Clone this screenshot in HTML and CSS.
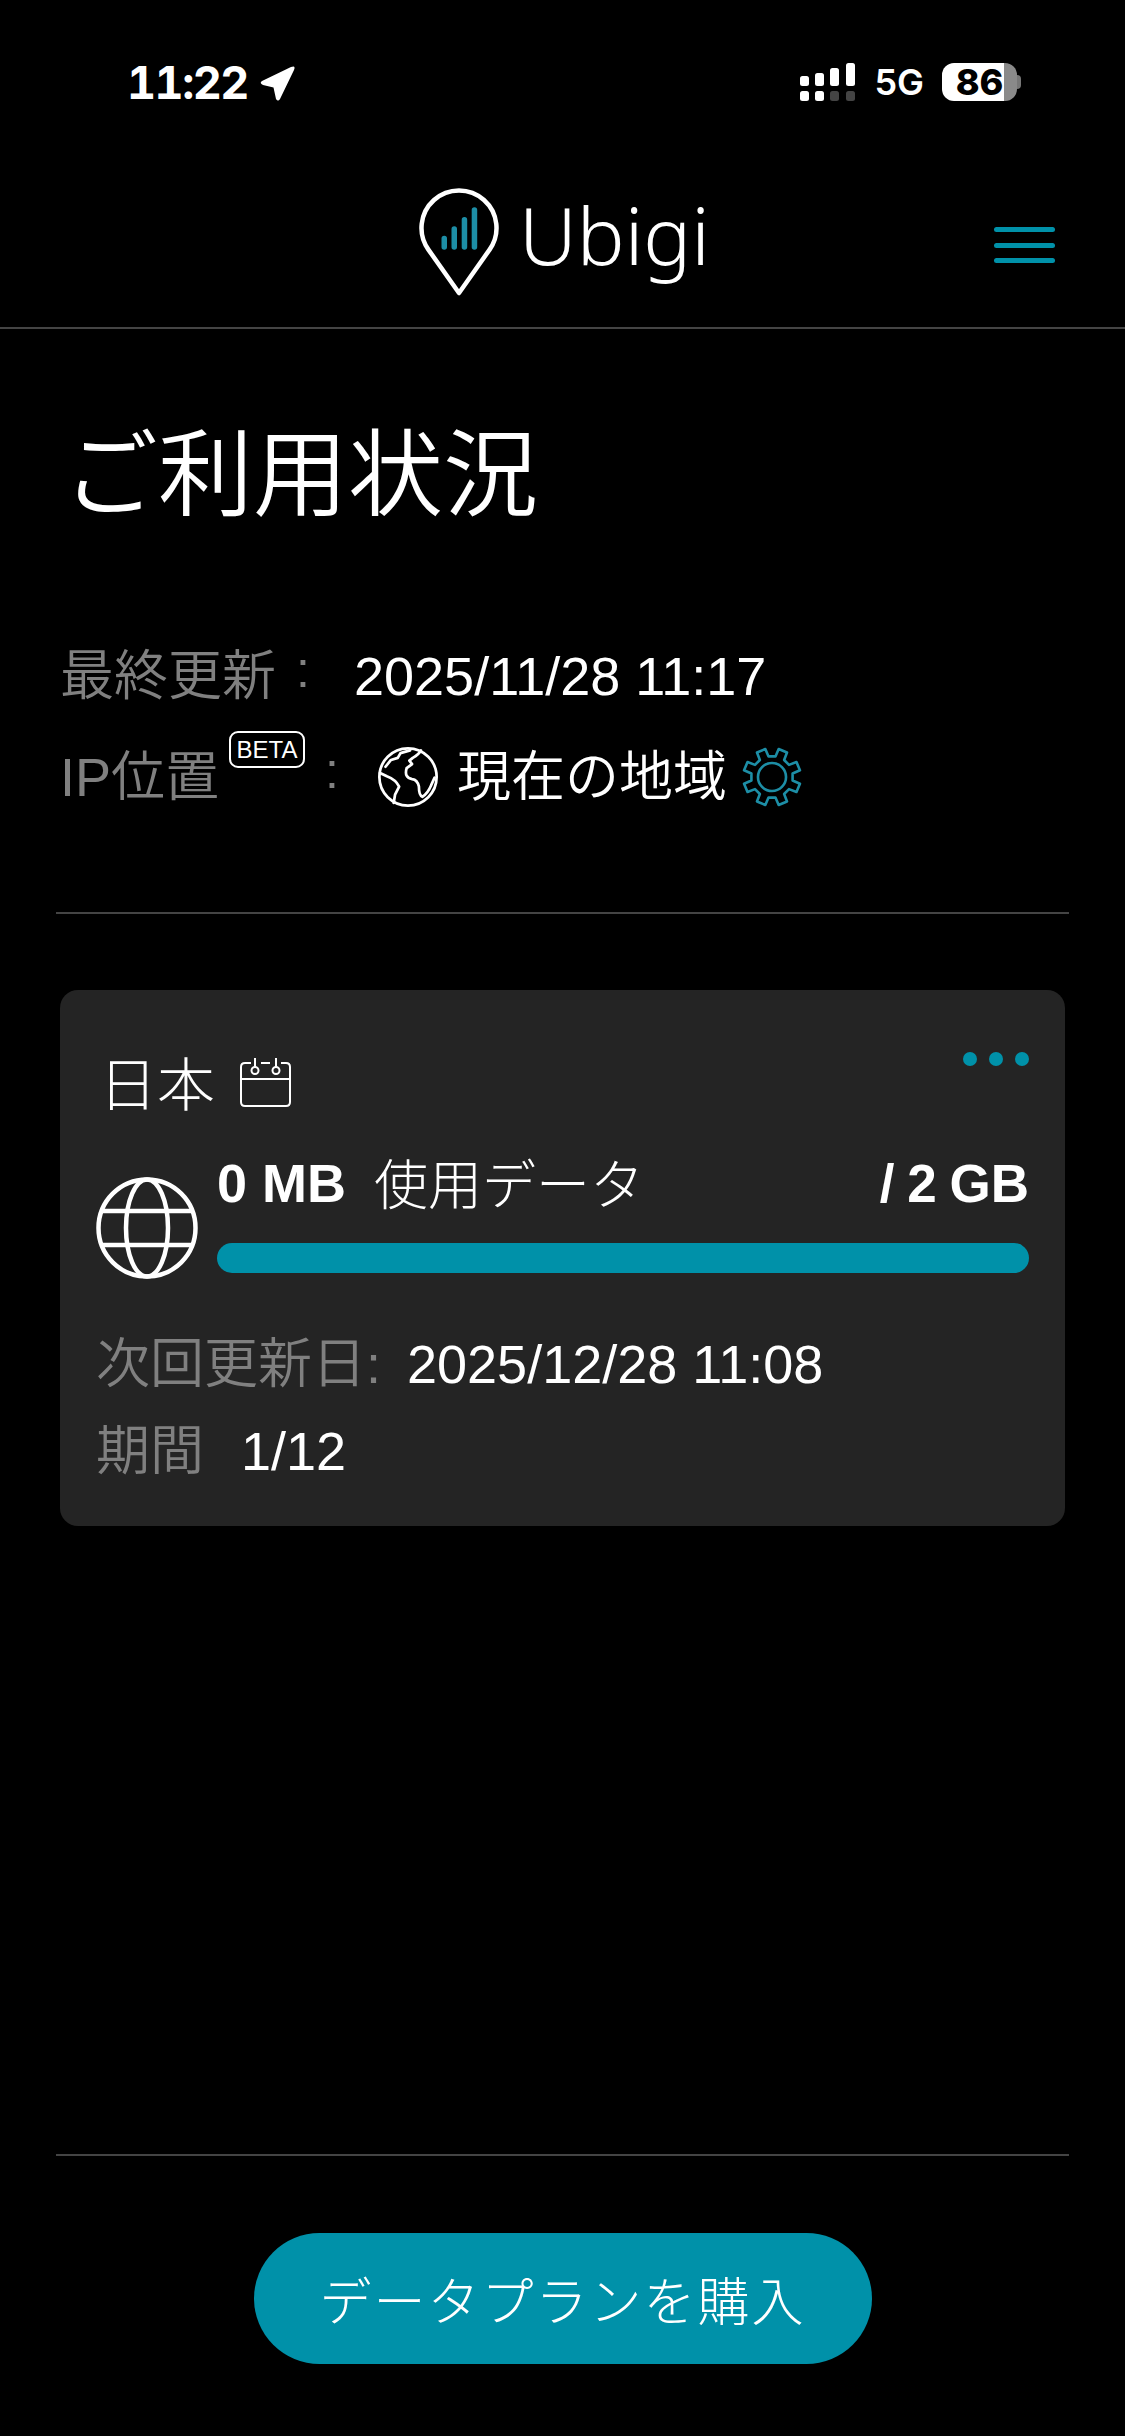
FILE: index.html
```html
<!DOCTYPE html>
<html lang="ja">
<head>
<meta charset="UTF-8" />
<title>ご利用状況</title>
<link rel="stylesheet" href="styles.css">
</head>
<body>
<div class="page">

  <div class="status-bar">
    <div class="status-left">
      <span class="time">11:22</span>
      <svg class="loc-arrow" viewBox="0 0 38 38"><path d="M3 17 L32 3 Q37 1 35 6 L21 35 Q19 38 17 35 L14.500 23.500 L4 21 Q0 19 3 17 Z" fill="#fff"/></svg>
    </div>
    <div class="status-right">
      <svg class="signal" viewBox="0 0 56 38">
        <rect x="0" y="13" width="9" height="10" rx="2.500" fill="#fff"/>
        <rect x="15" y="10" width="9" height="13" rx="2.500" fill="#fff"/>
        <rect x="30" y="5" width="9" height="18" rx="2.500" fill="#fff"/>
        <rect x="46" y="0" width="9" height="23" rx="2.500" fill="#fff"/>
        <rect x="0" y="28" width="9" height="10" rx="2.500" fill="#fff"/>
        <rect x="15" y="28" width="9" height="10" rx="2.500" fill="#fff"/>
        <rect x="30" y="28" width="9" height="10" rx="2.500" fill="#444"/>
        <rect x="46" y="28" width="9" height="10" rx="2.500" fill="#444"/>
      </svg>
      <span class="net">5G</span>
      <div class="battery">
        <div class="battery-body"><span class="battery-level">86</span></div>
        <div class="battery-cap"></div>
      </div>
    </div>
  </div>

  <div class="app-header">
    <div class="logo">
      <svg class="logo-pin" viewBox="0 0 82 110">
        <path d="M41 106 L10.400 62.600 A37.500 37.500 0 1 1 71.600 62.600 Z" fill="none" stroke="#fff" stroke-width="4.500" stroke-linejoin="round"/>
        <g fill="#1d8ea6">
          <rect x="23.500" y="48.700" width="5.500" height="14" rx="2.700"/>
          <rect x="33.500" y="39.300" width="5.500" height="23.400" rx="2.700"/>
          <rect x="43.700" y="30" width="5.500" height="32.700" rx="2.700"/>
          <rect x="53.700" y="20.300" width="5.500" height="42.400" rx="2.700"/>
        </g>
      </svg>
      <span class="logo-text">Ubigi</span>
    </div>
    <div class="menu-btn"><span></span><span></span><span></span></div>
  </div>

  <h1 class="page-title">ご利用状況</h1>

  <div class="info">
    <div class="info-row">
      <span class="info-label label-updated">最終更新</span>
      <span class="info-colon">:</span>
      <span class="info-value value-updated">2025/11/28 11:17</span>
    </div>
    <div class="info-row">
      <span class="info-label label-ip">IP位置<span class="beta">BETA</span></span>
      <span class="info-colon">:</span>
      <svg class="earth" viewBox="40 34 176 176" fill="none" stroke="#fff" stroke-width="8" stroke-linejoin="round" stroke-linecap="round">
        <circle cx="128" cy="122" r="84"/>
        <path d="M62 92 L78 72 L98 66 L106 52 L134 44"/>
        <path d="M166 44 Q160 56 142 66 L132 74 L140 84 L124 96 Q116 124 140 128 Q156 130 160 150 Q160 176 170 180 Q186 170 196 146 L206 124"/>
        <path d="M46 110 L66 120 Q92 130 102 150 L90 174 L86 198"/>
      </svg>
      <span class="info-value">現在の地域</span>
      <svg class="gear" viewBox="-95 -95 190 190" fill="none" stroke="#1d8ea6" stroke-width="8" stroke-linejoin="round">
        <path d="M10.600 -63.100 L20.500 -85.600 L46 -75 L37.200 -52.100 L52.100 -37.200 L75 -46 L85.600 -20.500 L63.100 -10.600 L63.100 10.600 L85.600 20.500 L75 46 L52.100 37.200 L37.200 52.100 L46 75 L20.500 85.600 L10.600 63.100 L-10.600 63.100 L-20.500 85.600 L-46 75 L-37.200 52.100 L-52.100 37.200 L-75 46 L-85.600 20.500 L-63.100 10.600 L-63.100 -10.600 L-85.600 -20.500 L-75 -46 L-52.100 -37.200 L-37.200 -52.100 L-46 -75 L-20.500 -85.600 L-10.600 -63.100 Z"/>
        <circle cx="0" cy="0" r="43"/>
      </svg>
    </div>
  </div>

  <div class="rule"></div>

  <div class="plan-card">
    <div class="plan-head">
      <span class="plan-name">日本</span>
      <svg class="cal" viewBox="0 0 51 50" fill="none" stroke="#fff" stroke-width="2">
        <path d="M11 5 H5 Q1 5 1 9 V44 Q1 48 5 48 H46 Q50 48 50 44 V9 Q50 5 46 5 H41"/>
        <path d="M21 5 H30"/>
        <path d="M1 21 H50"/>
        <path d="M15 0 V9"/><circle cx="15" cy="12.500" r="3.500"/>
        <path d="M36 0 V9"/><circle cx="36" cy="12.500" r="3.500"/>
      </svg>
      <div class="dots"><span></span><span></span><span></span></div>
    </div>
    <div class="usage">
      <svg class="globe" viewBox="0 0 102 102" fill="none" stroke="#fff" stroke-width="4.500">
        <circle cx="51" cy="51" r="48.500"/>
        <ellipse cx="51" cy="51" rx="21" ry="48.500"/>
        <path d="M6 34 H96"/>
        <path d="M6 68 H96"/>
      </svg>
      <div class="usage-main">
        <div class="usage-top">
          <span class="used">0 MB</span>
          <span class="used-label">使用データ</span>
          <span class="total">/ 2 GB</span>
        </div>
        <div class="bar"></div>
      </div>
    </div>
    <div class="plan-row">
      <span class="plan-label">次回更新日:</span>
      <span class="plan-value">2025/12/28 11:08</span>
    </div>
    <div class="plan-row period">
      <span class="plan-label">期間</span>
      <span class="plan-value">1/12</span>
    </div>
  </div>

  <div class="bottom">
    <div class="rule"></div>
    <div class="buy-wrap"><button class="buy-btn">データプランを購入</button></div>
  </div>

</div>
</body>
</html>
```

FILE: styles.css
```css
html, body {
  margin: 0;
  padding: 0;
  background: #000;
  color: #fff;
  font-family: 'Liberation Sans', 'Noto Sans CJK JP', sans-serif;
}

.page {
  width: 1125px;
  height: 2436px;
  display: flex;
  flex-direction: column;
  overflow: hidden;
}

.status-bar {
  height: 162px;
  box-sizing: border-box;
  padding: 60px 104px 0 127px;
  display: flex;
  justify-content: space-between;
  align-items: flex-start;
  flex-shrink: 0;
}

.status-left {
  display: flex;
  align-items: center;
  gap: 11px;
}

.time {
  font-family: Inter, sans-serif;
  font-size: 45px;
  font-weight: 700;
  line-height: 46px;
  font-variant-numeric: tabular-nums;
  letter-spacing: -1.500px;
}

.loc-arrow {
  width: 38px;
  height: 38px;
}

.status-right {
  display: flex;
  align-items: center;
  margin-top: 3px;
}

.signal {
  width: 56px;
  height: 38px;
}

.net {
  font-family: Inter, sans-serif;
  font-size: 36px;
  font-weight: 600;
  margin-left: 18px;
  line-height: 38px;
}

.battery {
  display: flex;
  align-items: center;
  margin-left: 18px;
}

.battery-body {
  width: 75px;
  height: 38px;
  border-radius: 12px;
  background: linear-gradient(to right, #fff 0, #fff 83%, #8a8a8a 83%);
  display: flex;
  justify-content: center;
  align-items: center;
}

.battery-level {
  color: #000;
  font-family: Inter, sans-serif;
  font-size: 36px;
  font-weight: 800;
  line-height: 38px;
}

.battery-cap {
  width: 4px;
  height: 14px;
  background: #777;
  border-radius: 0 4px 4px 0;
}

.app-header {
  height: 167px;
  box-sizing: border-box;
  border-bottom: 2px solid #444;
  position: relative;
  display: flex;
  justify-content: center;
  flex-shrink: 0;
}

.logo {
  display: flex;
  align-items: flex-start;
  padding: 25px 0 0 3px;
}

.logo-pin {
  width: 82px;
  height: 110px;
}

.logo-text {
  font-family: 'Noto Sans', sans-serif;
  font-weight: 300;
  font-size: 80px;
  line-height: 94px;
  margin-left: 19px;
}

.menu-btn {
  position: absolute;
  right: 70px;
  top: 65px;
  width: 61px;
  display: flex;
  flex-direction: column;
  gap: 10.500px;
}

.menu-btn span {
  height: 5px;
  background: #0091a9;
  border-radius: 3px;
}

.page-title {
  margin: 72px 0 0 63px;
  padding-bottom: 1px;
  font-family: 'Noto Sans CJK JP', sans-serif;
  font-size: 95px;
  font-weight: 350;
  line-height: 134px;
}

.info {
  margin: 105px 0 0 60px;
  display: flex;
  flex-direction: column;
  gap: 31px;
}

.info-row {
  display: flex;
  align-items: center;
  height: 70px;
}

.info-label, .plan-label {
  color: #808080;
  font-size: 54px;
  font-weight: 350;
  line-height: 70px;
}

.label-updated {
  width: 216px;
}

.info-colon {
  width: 54px;
  color: #808080;
  font-size: 50px;
  line-height: 70px;
  text-align: center;
  margin-top: -12px;
}

.info-value {
  font-size: 54px;
  font-weight: 350;
  line-height: 70px;
}

.value-updated {
  margin-left: 24px;
}

.label-ip {
  position: relative;
  width: 245px;
}

.beta {
  position: absolute;
  left: 169px;
  top: -11px;
  width: 76px;
  height: 37px;
  box-sizing: border-box;
  border: 2px solid #fff;
  border-radius: 9px;
  color: #fff;
  font-size: 24px;
  font-weight: 400;
  line-height: 33px;
  text-align: center;
}

.earth {
  width: 60px;
  height: 60px;
  margin: 0 19px;
}

.gear {
  width: 62px;
  height: 62px;
  margin-left: 14px;
}

.rule {
  height: 2px;
  background: #444;
  margin: 0 56px;
}

.info + .rule {
  margin-top: 100px;
}

.plan-card {
  margin: 76px 60px 0;
  height: 536px;
  box-sizing: border-box;
  background: #242424;
  border-radius: 18px;
  padding: 0 36px;
}

.plan-head {
  display: flex;
  align-items: center;
  position: relative;
  padding: 54px 0 0 3px;
}

.plan-name {
  font-size: 58px;
  line-height: 84px;
  font-weight: 300;
}

.cal {
  width: 51px;
  height: 50px;
  margin: 0 0 6px 25px;
}

.dots {
  position: absolute;
  right: 0;
  top: 62px;
  display: flex;
  gap: 12px;
}

.dots span {
  width: 14px;
  height: 14px;
  border-radius: 50%;
  background: #0091a9;
}

.usage {
  display: flex;
  margin-top: 28px;
}

.globe {
  width: 102px;
  height: 102px;
  margin: 21px 19px 0 0;
  flex-shrink: 0;
}

.usage-main {
  flex: 1;
  margin-top: -8px;
}

.usage-top {
  display: flex;
  align-items: center;
  height: 70px;
}

.used {
  font-size: 54px;
  font-weight: 700;
}

.total {
  font-size: 53px;
  font-weight: 700;
  margin-left: auto;
  word-spacing: -2px;
}

.used-label {
  font-size: 54px;
  font-weight: 300;
  margin: -4px 0 0 28px;
}

.bar {
  height: 30px;
  margin-top: 25px;
  border-radius: 15px;
  background: #0091a9;
}

.plan-row {
  display: flex;
  align-items: center;
  margin-top: 50px;
  height: 70px;
}

.plan-row.period {
  margin-top: 17px;
}

.plan-value {
  font-size: 54px;
  font-weight: 350;
  line-height: 70px;
}

.plan-row .plan-label {
  margin-right: 26px;
}

.plan-row.period .plan-label {
  margin-right: 37px;
}

.bottom {
  margin-top: auto;
  padding-bottom: 72px;
}

.buy-wrap {
  display: flex;
  justify-content: center;
  margin-top: 77px;
}

.buy-btn {
  width: 618px;
  height: 131px;
  border: none;
  border-radius: 66px;
  background: #0091a9;
  color: #fff;
  font-family: 'Noto Sans CJK JP', sans-serif;
  font-size: 52px;
  font-weight: 300;
  letter-spacing: 2px;
}
```
